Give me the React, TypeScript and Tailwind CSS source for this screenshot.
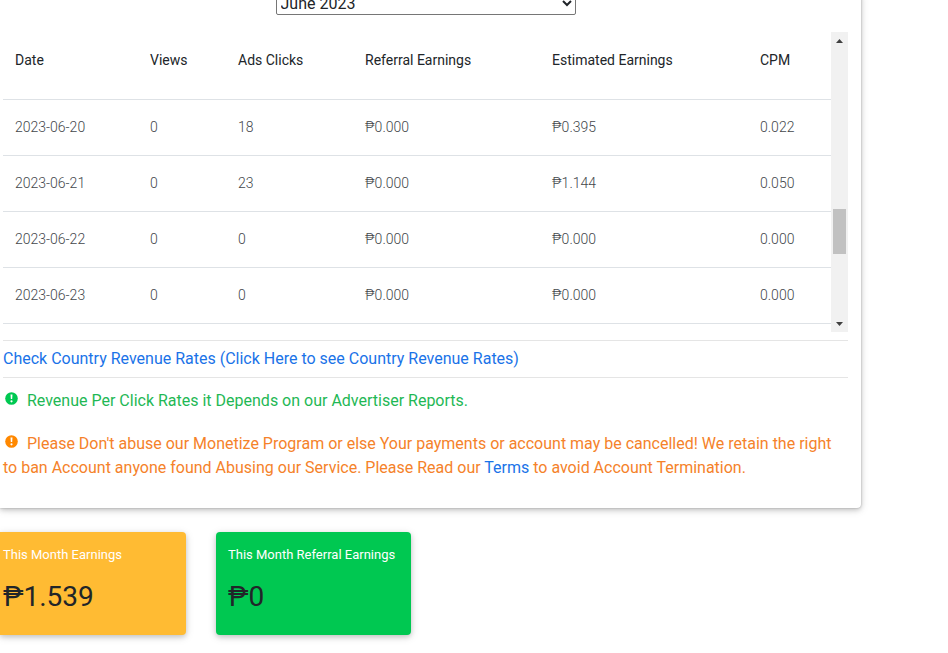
const columns = [
  { label: "Date", width: "w-[135px]" },
  { label: "Views", width: "w-[88px]" },
  { label: "Ads Clicks", width: "w-[127px]" },
  { label: "Referral Earnings", width: "w-[187px]" },
  { label: "Estimated Earnings", width: "w-[208px]" },
  { label: "CPM", width: "w-[83px]" },
];

const rows = [
  ["2023-06-20", "0", "18", "₱0.000", "₱0.395", "0.022"],
  ["2023-06-21", "0", "23", "₱0.000", "₱1.144", "0.050"],
  ["2023-06-22", "0", "0", "₱0.000", "₱0.000", "0.000"],
  ["2023-06-23", "0", "0", "₱0.000", "₱0.000", "0.000"],
];

function AlertIcon({ className }: { className: string }) {
  return (
    <svg viewBox="0 0 13 14" aria-hidden="true" className={`mr-[5px] ml-0.5 inline-block h-3.5 w-[13px] align-baseline ${className}`}>
      <circle cx="6.5" cy="6.5" r="6.3" fill="currentColor" />
      <path d="M5.5 2.5h2l-.3 4.6H5.8z" fill="#fff" />
      <circle cx="6.5" cy="9.3" r="1.1" fill="#fff" />
    </svg>
  );
}

function ScrollBar() {
  return (
    <div className="flex w-[17px] shrink-0 flex-col bg-[#f1f1f1]">
      <button type="button" aria-label="Scroll up" className="flex h-[17px] items-center justify-center">
        <svg viewBox="0 0 7 4" className="h-1 w-[7px]" fill="#404040"><path d="M3.5 0 7 4H0z" /></svg>
      </button>
      <div className="flex-1 px-0.5 pt-40">
        <div className="h-[45px] bg-[#c1c1c1]" />
      </div>
      <button type="button" aria-label="Scroll down" className="flex h-[17px] items-center justify-center">
        <svg viewBox="0 0 7 4" className="h-1 w-[7px]" fill="#404040"><path d="M0 0h7L3.5 4z" /></svg>
      </button>
    </div>
  );
}

function EarningsTable() {
  return (
    <div className="mt-[17px] flex h-[300px]">
      <div className="min-w-0 flex-1 overflow-hidden">
        <table className="w-full table-fixed border-collapse text-left text-sm">
          <thead>
            <tr className="h-[67px] border-b border-[#dee2e6] text-[#212529]">
              {columns.map((col) => (
                <th key={col.label} className={`pt-4 pl-3 align-top font-normal ${col.width}`}>
                  <span className="leading-6">{col.label}</span>
                </th>
              ))}
            </tr>
          </thead>
          <tbody>
            {rows.map((row) => (
              <tr key={row[0]} className="h-14 border-b border-[#dee2e6] font-light text-[#43474b]">
                {row.map((cell, i) => (
                  <td key={i} className="pl-3">{cell}</td>
                ))}
              </tr>
            ))}
          </tbody>
        </table>
      </div>
      <ScrollBar />
    </div>
  );
}

export default function App() {
  return (
    <div className="overflow-hidden bg-white pb-[18px] font-[Roboto,sans-serif] text-base text-[#212529]">
      <main className="mr-[87px] rounded-br pr-[13px] pb-7 pl-[3px] shadow-[0_2px_5px_0_rgba(0,0,0,0.16),0_2px_10px_0_rgba(0,0,0,0.12),0_0_2px_0_rgba(0,0,0,0.25)]">
        <select
          aria-label="Month"
          defaultValue="June 2023"
          className="mx-auto -mt-[9px] block h-6 w-[300px] rounded-xs border border-[#767676] bg-white text-[#212529]"
        >
          <option>June 2023</option>
        </select>

        <EarningsTable />

        <p className="mt-2 border-y border-black/10 py-1.5 text-[#1a73e8]">
          <a href="#rates">Check Country Revenue Rates (Click Here to see Country Revenue Rates)</a>
        </p>

        <p className="mt-[11px] text-[#1fb855]">
          <AlertIcon className="text-[#00c851]" /> Revenue Per Click Rates it Depends on our Advertiser Reports.
        </p>

        <p className="mt-[19px] text-[#f5822a]">
          <AlertIcon className="text-[#ff8800]" /> Please Don't abuse our Monetize Program or else Your payments or account may be
          cancelled! We retain the right to ban Account anyone found Abusing our Service. Please Read our{" "}
          <a href="#terms" className="text-[#1a73e8]">Terms</a> to avoid Account Termination.
        </p>
      </main>

      <section className="mt-6 flex gap-[30px]">
        <div className="h-[103px] w-[186px] rounded-r bg-[#ffbb33] pt-[13px] pl-[3px] shadow-[0_2px_5px_0_rgba(0,0,0,0.16),0_2px_10px_0_rgba(0,0,0,0.12)]">
          <h2 className="text-[13px] leading-5 text-white">This Month Earnings</h2>
          <p className="mt-3 text-[28px] leading-10">₱1.539</p>
        </div>
        <div className="h-[103px] w-[195px] rounded bg-[#00c851] pt-[13px] pl-3 shadow-[0_2px_5px_0_rgba(0,0,0,0.16),0_2px_10px_0_rgba(0,0,0,0.12)]">
          <h2 className="text-[13px] leading-5 text-white">This Month Referral Earnings</h2>
          <p className="mt-3 text-[28px] leading-10">₱0</p>
        </div>
      </section>
    </div>
  );
}
